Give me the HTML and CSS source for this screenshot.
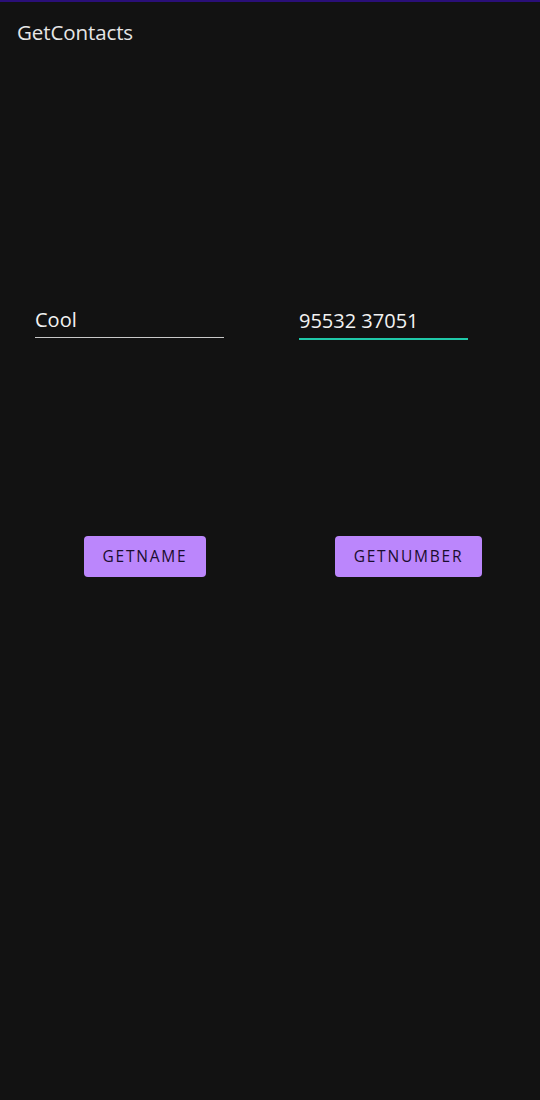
FILE: index.html
```html
<!DOCTYPE html>
<html>
<head>
<meta charset="utf-8">
<link rel="stylesheet" href="styles.css">
</head>
<body>
<div class="app">
  <div class="topbar"><span class="title">GetContacts</span></div>
  <div class="fields">
    <div class="field name"><span class="value">Cool</span></div>
    <div class="field number focused"><span class="value">95532 37051</span></div>
  </div>
  <div class="buttons">
    <button class="btn btn-name">GETNAME</button>
    <button class="btn btn-number">GETNUMBER</button>
  </div>
</div>
</body>
</html>
```

FILE: styles.css
```css
html, body {
  margin: 0;
  padding: 0;
  background: #121212;
}
body {
  font-family: "Open Sans", "Noto Sans", sans-serif;
  color: #ffffff;
}
.app {
  width: 540px;
  height: 1100px;
  background: #121212;
  border-top: 2px solid #2a0f78;
  box-sizing: border-box;
}
.topbar {
  padding: 16px 0 0 17px;
  height: 42px;
}
.title {
  font-size: 20.5px;
  color: #e6e6e6;
  line-height: 28px;
  letter-spacing: -0.1px;
}
.fields {
  display: flex;
  margin-top: 246px;
  padding-left: 35px;
  gap: 75px;
}
.field {
  display: flex;
  align-items: flex-end;
  height: 32px;
  box-sizing: border-box;
}
.field .value {
  font-size: 20px;
  line-height: 28px;
  color: #f2f2f2;
  padding-bottom: 3px;
}
.field.name {
  width: 189px;
  border-bottom: 1px solid #c8c8c8;
}
.field.number {
  width: 169px;
  height: 34px;
  border-bottom: 2px solid #1fc8a8;
}
.buttons {
  display: flex;
  margin-top: 196px;
  padding-left: 84px;
  gap: 129px;
}
.btn {
  height: 41px;
  border: none;
  border-radius: 4px;
  background: #bb86fc;
  color: #1a0d2e;
  font-family: "Open Sans", "Noto Sans", sans-serif;
  font-size: 15.5px;
  font-weight: 500;
  letter-spacing: 1.8px;
  padding: 0 0 1px 0;
}
.btn-name { width: 122px; }
.btn-number { width: 147px; }
```
